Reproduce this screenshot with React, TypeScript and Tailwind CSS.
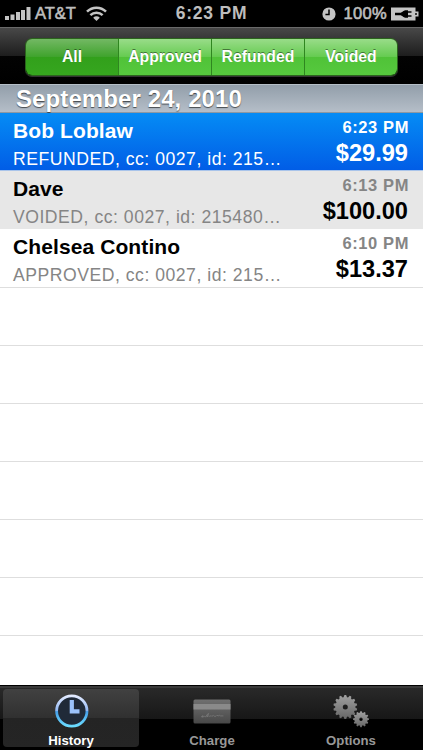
import React, { useState } from 'react';

const filters = ['All', 'Approved', 'Refunded', 'Voided'];

const transactions = [
  { name: 'Bob Loblaw', detail: 'REFUNDED, cc: 0027, id: 215…', time: '6:23 PM', amount: '$29.99' },
  { name: 'Dave', detail: 'VOIDED, cc: 0027, id: 215480…', time: '6:13 PM', amount: '$100.00' },
  { name: 'Chelsea Contino', detail: 'APPROVED, cc: 0027, id: 215…', time: '6:10 PM', amount: '$13.37' },
];

const gearPath = (cx: number, cy: number, outer: number, inner: number, hole: number, teeth: number) => {
  const points: string[] = [];
  const step = (Math.PI * 2) / teeth;
  for (let i = 0; i < teeth; i++) {
    [[-0.38, inner], [-0.16, outer], [0.16, outer], [0.38, inner]].forEach(([offset, r]) => {
      const a = (i + offset) * step - Math.PI / 2;
      points.push(`${(cx + Math.cos(a) * r).toFixed(2)} ${(cy + Math.sin(a) * r).toFixed(2)}`);
    });
  }
  return `M${points.join('L')}Z M${cx - hole} ${cy}a${hole} ${hole} 0 1 0 ${hole * 2} 0a${hole} ${hole} 0 1 0 ${-hole * 2} 0Z`;
};

const StatusBar = () => (
  <div className="h-[27px] shrink-0 bg-black grid grid-cols-[1fr_auto_1fr] items-center text-[#bdbdbd]">
    <div className="flex items-center pl-[5px]">
      <svg width="26" height="14" viewBox="0 0 26 14" fill="#c4c4c4">
        <rect x="0" y="9" width="4" height="4" />
        <rect x="5.5" y="7.5" width="4" height="5.5" />
        <rect x="11" y="5" width="4" height="8" />
        <rect x="16" y="3" width="4" height="10" />
        <rect x="21.5" y="0" width="4" height="13" />
      </svg>
      <span className="ml-1 text-[16.5px] font-normal [-webkit-text-stroke:0.6px_#bdbdbd]">AT&amp;T</span>
      <svg className="ml-[10px]" width="21" height="16" viewBox="0 0 21 16" fill="none" stroke="#c4c4c4" strokeWidth="2.5">
        <path d="M1 5.6C6.3.3 14.7.3 20 5.6" />
        <path d="M4.4 9.2c3.4-3.3 8.8-3.3 12.2 0" />
        <path d="M7.2 11.7c1.9-1.8 4.7-1.8 6.6 0L10.5 15Z" fill="#c4c4c4" stroke="none" />
      </svg>
    </div>
    <span className="text-[17.5px] font-bold tracking-[0.8px]">6:23 PM</span>
    <div className="flex items-center justify-end pr-[4px]">
      <svg width="14" height="14" viewBox="0 0 14 14">
        <circle cx="7" cy="7" r="6.6" fill="#c4c4c4" />
        <path d="M7 2.6V7.6H3.4" fill="none" stroke="#000" strokeWidth="1.5" />
      </svg>
      <span className="ml-[8px] text-[16.5px] [-webkit-text-stroke:0.6px_#bdbdbd] tracking-[0.3px]">100%</span>
      <svg className="ml-[4px]" width="28" height="14" viewBox="0 0 28 14">
        <path d="M0 0.5H24.5V4.5H27.5V9.5H24.5V13.5H0Z" fill="#c4c4c4" />
        <path d="M4 5.7H9C11.5 5.7 12 3.2 15 3.2H17V10.8H15C12 10.8 11.5 8.3 9 8.3H4Z" fill="#000" />
        <path d="M16 5H20.5M16 9H20.5" stroke="#000" strokeWidth="1.5" />
        <path d="M25 6V8" stroke="#000" strokeWidth="1.4" />
      </svg>
    </div>
  </div>
);

const ClockIcon = () => (
  <svg width="36" height="36" viewBox="0 0 36 36">
    <defs>
      <linearGradient id="clock" x1="0" y1="0" x2="0" y2="1">
        <stop offset="0" stopColor="#e2eaff" />
        <stop offset="0.48" stopColor="#94b9f4" />
        <stop offset="0.52" stopColor="#459ee8" />
        <stop offset="1" stopColor="#6bdcff" />
      </linearGradient>
    </defs>
    <circle cx="18.8" cy="18" r="15.2" fill="#202a38" stroke="url(#clock)" strokeWidth="2.8" />
    <path d="M18.8 7V18.4H26.5" fill="none" stroke="#9bc2fb" strokeWidth="4.2" />
  </svg>
);

const CardIcon = () => (
  <svg width="38" height="25" viewBox="0 0 38 25">
    <defs>
      <linearGradient id="card" x1="0" y1="0" x2="0" y2="1">
        <stop offset="0" stopColor="#707070" />
        <stop offset="1" stopColor="#484848" />
      </linearGradient>
    </defs>
    <rect x="0.5" y="0.5" width="37" height="24" rx="1.5" fill="url(#card)" />
    <rect x="0.5" y="5" width="37" height="5.5" fill="#8a8a8a" />
    <path d="M8 18l2-1.4-.6 1.6 2-.9 1 .6 2.4-3 1-.3-2 3.2 2-1 1 .6 1.4-.8.6.8 1.5-1 .8.8h2l1-1 1 .7 1.5-.6.8.6h3" fill="none" stroke="#858585" strokeWidth="0.6" />
  </svg>
);

const GearsIcon = () => (
  <svg width="38" height="34" viewBox="0 0 38 34">
    <defs>
      <linearGradient id="gear" x1="0" y1="0" x2="0" y2="1">
        <stop offset="0" stopColor="#a0a0a0" />
        <stop offset="1" stopColor="#666" />
      </linearGradient>
    </defs>
    <path d={gearPath(13.3, 13, 12, 10, 2.5, 14)} fill="url(#gear)" fillRule="evenodd" />
    <path d={gearPath(29, 25.2, 8, 6.5, 1.7, 12)} fill="url(#gear)" fillRule="evenodd" />
  </svg>
);

const tabs = [
  { label: 'History', icon: <ClockIcon />, margin: 'ml-[3px]' },
  { label: 'Charge', icon: <CardIcon />, margin: 'ml-[5px]' },
  { label: 'Options', icon: <GearsIcon />, margin: 'ml-[3px]' },
];

const App: React.FC = () => {
  const [filter, setFilter] = useState('All');
  const [selected, setSelected] = useState(0);
  const [tab, setTab] = useState('History');

  return (
    <div className="w-[423px] h-[750px] flex flex-col overflow-hidden bg-white font-['Liberation_Sans',Arial,sans-serif]">
      <StatusBar />

      <header className="h-[57px] shrink-0 px-[25px] pt-[10px] border-t border-[#6a6a6a] bg-[linear-gradient(#484848,#1d1d1d_50%,#030303_50%,#000)]">
        <div className="h-[38px] w-[373px] flex rounded-[7px] overflow-hidden border border-[#2b641d] shadow-[0_1px_0_#333]">
          {filters.map((f) => (
            <button
              key={f}
              onClick={() => setFilter(f)}
              className={`flex-1 pb-px text-[15.8px] font-bold text-white [text-shadow:0_-1px_0_rgba(0,0,0,0.45)] border-r border-[#2f8620] last:border-r-0 ${
                filter === f
                  ? 'bg-[linear-gradient(#73b864,#3fa32c_50%,#32a01b_50%,#36a61f)]'
                  : 'bg-[linear-gradient(#99dc89,#65cb50_50%,#50c238_50%,#56c93e)]'
              }`}
            >
              {f}
            </button>
          ))}
        </div>
      </header>

      <h2 className="h-[29px] shrink-0 pl-[16px] border-t border-[#b5bec7] border-b border-b-[#8d98a2] bg-[linear-gradient(#929eaa,#b5bec8)] text-white text-[24px] leading-[28px] font-bold tracking-[0.1px] [text-shadow:0_1px_1px_rgba(0,0,0,0.6)]">
        September 24, 2010
      </h2>

      <main className="flex-1 min-h-0 overflow-hidden">
        {transactions.map((t, i) => {
          const active = selected === i;
          return (
            <div
              key={t.name}
              onClick={() => setSelected(i)}
              className={`flex justify-between pl-[13px] pr-[15px] border-b ${i === transactions.length - 1 ? 'h-[59px]' : 'h-[58px]'} ${
                active
                  ? 'bg-[linear-gradient(#058cf5,#015de6)] border-[#a9c4ea] text-white'
                  : i % 2 ? 'bg-[#e7e7e7] border-[#e7e7e7] text-black' : 'bg-white border-[#dedede] text-black'
              }`}
            >
              <div>
                <div className="pt-[6px] text-[21px] leading-[24px] font-bold tracking-[0.1px]">{t.name}</div>
                <div className={`mt-[6px] text-[17.6px] leading-[20px] tracking-[0.52px] whitespace-nowrap ${active ? '' : 'text-[#858585]'}`}>{t.detail}</div>
              </div>
              <div className="text-right font-bold">
                <div className={`pt-[4px] text-[16.5px] leading-[20px] tracking-[0.6px] -mr-px ${active ? '' : 'text-[#858585]'}`}>{t.time}</div>
                <div className="mt-[2px] text-[23.6px] leading-[28px]">{t.amount}</div>
              </div>
            </div>
          );
        })}
        {Array.from({ length: 7 }, (_, i) => (
          <div key={i} className="h-[58px] bg-white border-b border-[#dedede]" />
        ))}
      </main>

      <nav className="h-[65px] shrink-0 flex pt-[3px] border-t border-black bg-[linear-gradient(#3a3a3a_0,#3a3a3a_2px,#292929_2px,#171717_33px,#000_33px)]">
        {tabs.map(({ label, icon, margin }) => (
          <button
            key={label}
            onClick={() => setTab(label)}
            className={`${margin} w-[136px] h-[58px] shrink-0 rounded-[4px] flex flex-col items-center justify-start ${
              tab === label ? 'bg-[linear-gradient(#414141,#303030_50%,#242424_50%,#252525)] text-white' : 'text-[#989898]'
            }`}
          >
            <span className="h-[44px] w-full shrink-0 flex items-center justify-center">{icon}</span>
            <span className="text-[13.2px] leading-[15px] font-bold">{label}</span>
          </button>
        ))}
      </nav>
    </div>
  );
};

export default App;
